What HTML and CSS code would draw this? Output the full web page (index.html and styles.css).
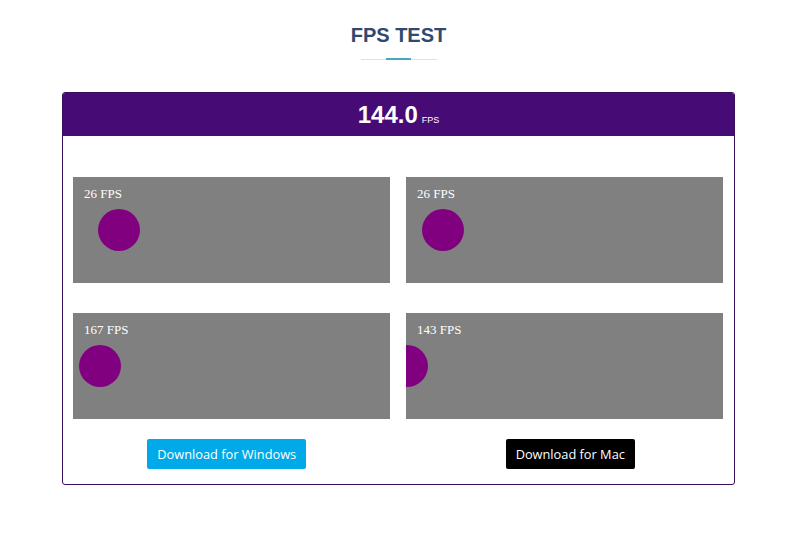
FILE: index.html
```html
<!DOCTYPE html>
<html>
<head>
<meta charset="utf-8">
<title>FPS Test</title>
<link rel="stylesheet" href="styles.css">
</head>
<body>
<div class="page">
  <h1 class="title">FPS TEST</h1>
  <div class="divider"><div class="divider-accent"></div></div>
  <div class="card">
    <div class="card-header">
      <span class="fps-value">144.0</span><span class="fps-unit">FPS</span>
    </div>
    <div class="card-body">
      <div class="canvas-grid">
        <svg class="canvas" width="317" height="106" viewBox="0 0 317 106">
          <rect width="317" height="106" fill="#808080"/>
          <text x="11" y="21" class="canvas-text">26 FPS</text>
          <circle cx="46" cy="53" r="21" fill="#800080"/>
        </svg>
        <svg class="canvas" width="317" height="106" viewBox="0 0 317 106">
          <rect width="317" height="106" fill="#808080"/>
          <text x="11" y="21" class="canvas-text">26 FPS</text>
          <circle cx="37" cy="53" r="21" fill="#800080"/>
        </svg>
        <svg class="canvas" width="317" height="106" viewBox="0 0 317 106">
          <rect width="317" height="106" fill="#808080"/>
          <text x="11" y="21" class="canvas-text">167 FPS</text>
          <circle cx="27" cy="53" r="21" fill="#800080"/>
        </svg>
        <svg class="canvas" width="317" height="106" viewBox="0 0 317 106">
          <rect width="317" height="106" fill="#808080"/>
          <text x="11" y="21" class="canvas-text">143 FPS</text>
          <circle cx="1" cy="53" r="21" fill="#800080"/>
        </svg>
      </div>
      <div class="downloads">
        <a class="btn btn-windows" href="#">Download for Windows</a>
        <a class="btn btn-mac" href="#">Download for Mac</a>
      </div>
    </div>
  </div>
</div>
</body>
</html>
```
FILE: styles.css
```css
html, body {
  margin: 0;
  padding: 0;
  background: #ffffff;
}

body {
  font-family: "Liberation Sans", Arial, sans-serif;
}

.page {
  width: 673px;
  margin-left: 62px;
  padding-top: 23px;
}

.title {
  margin: 0;
  font-size: 20px;
  line-height: 24px;
  font-weight: bold;
  text-align: center;
  color: #2f4a6e;
}

.divider {
  width: 76px;
  height: 2px;
  margin: 11px auto 0;
  background: linear-gradient(#e0e0e0, #e0e0e0) center / 100% 1px no-repeat;
  display: flex;
  justify-content: center;
}

.divider-accent {
  width: 25px;
  height: 2px;
  background: #4aa9c0;
}

.card {
  margin-top: 32px;
  border: 1px solid #3a0e5a;
  border-radius: 3px;
  overflow: hidden;
}

.card-header {
  height: 43px;
  line-height: 43px;
  background: #470b75;
  color: #ffffff;
  text-align: center;
}

.fps-value {
  font-size: 24px;
  font-weight: bold;
}

.fps-unit {
  font-size: 9px;
  margin-left: 4px;
}

.card-body {
  padding: 41px 10px 15px;
}

.canvas-grid {
  display: grid;
  grid-template-columns: 317px 317px;
  column-gap: 16px;
  row-gap: 30px;
}

.canvas {
  display: block;
}

.canvas-text {
  font-family: "Liberation Serif", "Times New Roman", serif;
  font-size: 13px;
  fill: #ffffff;
}

.downloads {
  margin-top: 20px;
  display: grid;
  grid-template-columns: 1fr 1fr;
  column-gap: 36px;
  justify-items: center;
}

.btn {
  display: block;
  height: 30px;
  line-height: 30px;
  padding: 0 10px;
  border-radius: 2px;
  font-family: "Open Sans", sans-serif;
  font-size: 12.8px;
  color: #ffffff;
  text-decoration: none;
}

.btn-windows {
  background: #00a9e8;
}

.btn-mac {
  background: #000000;
}
```
